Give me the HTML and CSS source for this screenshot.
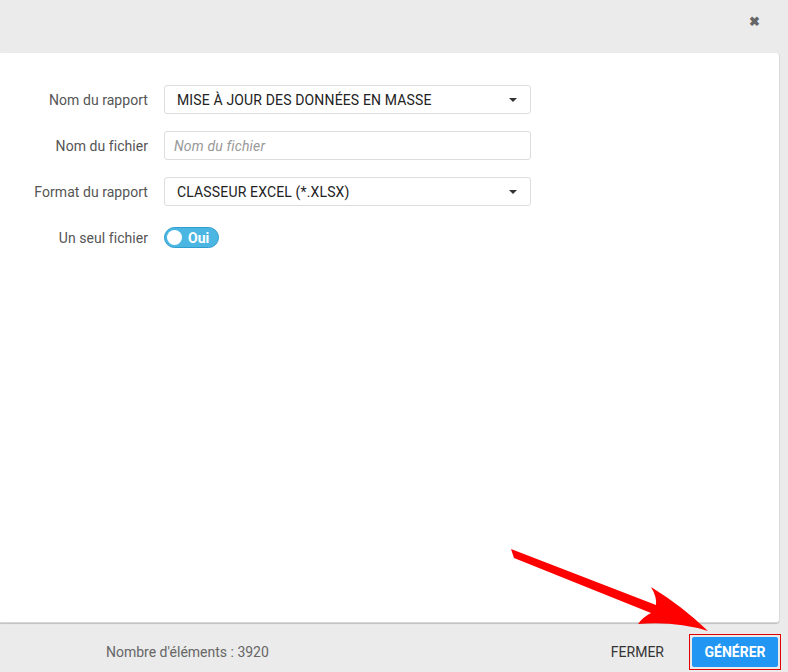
FILE: index.html
```html
<!DOCTYPE html>
<html lang="fr">
<head>
<meta charset="utf-8">
<link rel="stylesheet" href="styles.css">
</head>
<body>
<div class="modal">
  <div class="header">
    <span class="close">&#10006;</span>
  </div>
  <div class="panel">
    <div class="form">
      <div class="row">
        <label class="label">Nom du rapport</label>
        <div class="field select"><span>MISE À JOUR DES DONNÉES EN MASSE</span><span class="caret"></span></div>
      </div>
      <div class="row">
        <label class="label">Nom du fichier</label>
        <div class="field input"><span class="placeholder">Nom du fichier</span></div>
      </div>
      <div class="row">
        <label class="label">Format du rapport</label>
        <div class="field select"><span>CLASSEUR EXCEL (*.XLSX)</span><span class="caret"></span></div>
      </div>
      <div class="row">
        <label class="label">Un seul fichier</label>
        <div class="toggle"><span class="knob"></span><span class="toggle-text">Oui</span></div>
      </div>
    </div>
  </div>
  <div class="footer">
    <span class="count">Nombre d'éléments : 3920</span>
    <span class="btn-close">FERMER</span>
    <span class="highlight"><span class="btn-primary">GÉNÉRER</span></span>
  </div>
  <svg class="arrow" width="788" height="672" viewBox="0 0 788 672">
    <path d="M511,549 L514,558 L651,613 Q643,617 638,624 Q676,621 708,631 Q682,606 651,587 Q657,597 656,605 Z" fill="#ff0000"/>
  </svg>
</div>
</body>
</html>
```
FILE: styles.css
```css
* { box-sizing: border-box; }
html, body {
  margin: 0;
  padding: 0;
  background: #ebebeb;
  font-family: Roboto, "Liberation Sans", Arial, sans-serif;
  font-size: 14px;
}
.modal {
  position: relative;
  width: 788px;
  height: 672px;
  display: flex;
  flex-direction: column;
}
.header {
  height: 53px;
  display: flex;
  justify-content: flex-end;
  align-items: flex-start;
  padding: 15px 28px 0 0;
}
.close {
  color: #666;
  font-size: 13px;
  font-weight: bold;
  line-height: 14px;
}
.panel {
  width: 779px;
  height: 570px;
  background: #fff;
  border-radius: 0 3px 3px 0;
  box-shadow: 0 1px 1px rgba(0,0,0,0.18), 1px 0 1px rgba(0,0,0,0.06);
  border-bottom: 1px solid #d6d6d6;
}
.form {
  padding-top: 32px;
  display: flex;
  flex-direction: column;
  gap: 17px;
}
.row {
  display: flex;
  align-items: center;
  height: 29px;
}
.label {
  width: 149px;
  text-align: right;
  padding-right: 1px;
  color: #555;
  margin-right: 15px;
  letter-spacing: 0.05px;
}
.field {
  width: 367px;
  height: 29px;
  border: 1px solid #ddd;
  border-radius: 3px;
  display: flex;
  align-items: center;
  padding: 0 12px;
  color: #222;
  letter-spacing: 0.15px;
}
.select { justify-content: space-between; }
.caret {
  width: 0;
  height: 0;
  border-left: 4px solid transparent;
  border-right: 4px solid transparent;
  border-top: 4px solid #333;
  margin-right: 1px;
}
.input { padding-left: 9px; }
.placeholder {
  color: #999;
  font-style: italic;
}
.toggle {
  width: 55px;
  height: 21px;
  border-radius: 11px;
  background: #4cb6e2;
  border: 1px solid #2e9ccf;
  display: flex;
  align-items: center;
  padding-left: 2px;
  gap: 6px;
}
.knob {
  width: 15px;
  height: 15px;
  border-radius: 50%;
  background: #fff;
}
.toggle-text {
  color: #fff;
  font-weight: bold;
  font-size: 14px;
}
.footer {
  flex: 1;
  display: flex;
  align-items: center;
  padding: 9px 0 0 106px;
}
.count {
  color: #666;
}
.btn-close {
  margin-left: auto;
  color: #333;
  margin-right: 25px;
}
.highlight {
  border: 1px solid #e00000;
  padding: 2px;
  margin-right: 7px;
  display: flex;
}
.btn-primary {
  background: #2196f3;
  color: #fff;
  font-weight: bold;
  width: 86px;
  height: 30px;
  border-radius: 2px;
  display: flex;
  align-items: center;
  justify-content: center;
}
.arrow {
  position: absolute;
  left: 0;
  top: 0;
  pointer-events: none;
}
```
